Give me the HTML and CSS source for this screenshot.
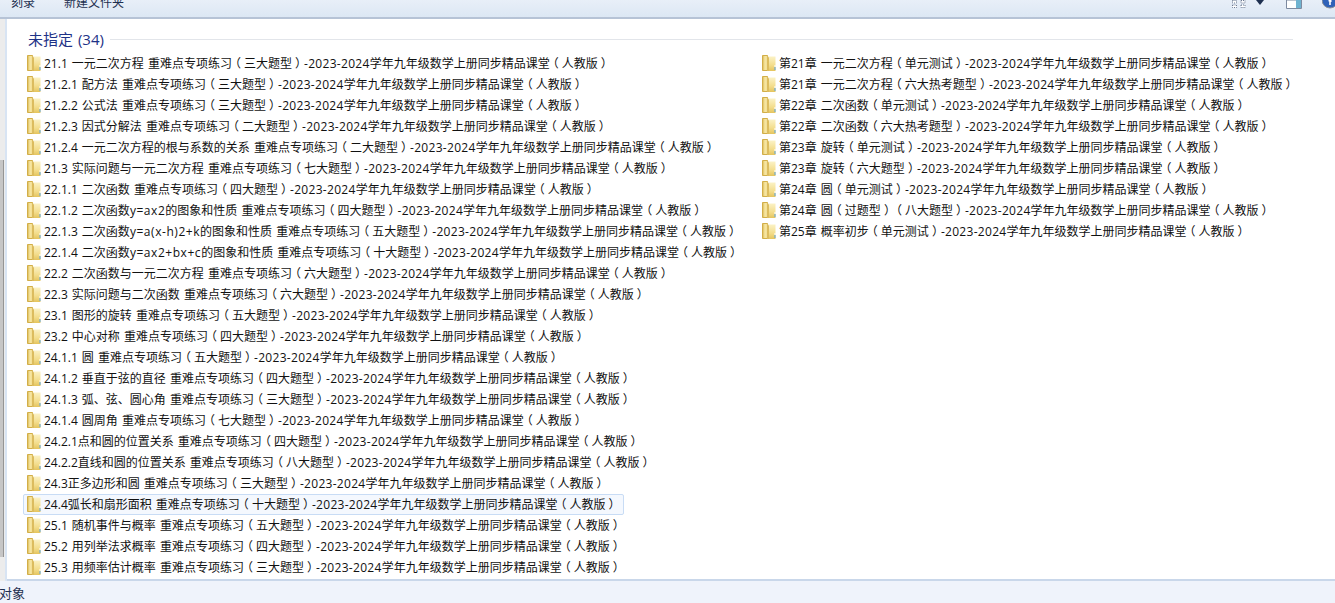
FILE: index.html
```html
<!DOCTYPE html>
<html lang="zh">
<head><meta charset="utf-8"><title>未指定</title><link rel="stylesheet" href="styles.css"></head>
<body>
<svg class="defs" width="0" height="0"><defs>
<linearGradient id="fg" x1="0" x2="1" y1="0" y2="0"><stop offset="0" stop-color="#d9b750"/><stop offset=".5" stop-color="#f7e7a4"/><stop offset="1" stop-color="#f1dc90"/></linearGradient>
<linearGradient id="fr" x1="0" x2="0" y1="0" y2="1"><stop offset="0" stop-color="#fbf2c6"/><stop offset=".6" stop-color="#f3dd8c"/><stop offset="1" stop-color="#e4c45e"/></linearGradient>
<symbol id="folder" viewBox="0 0 14 16">
<path d="M.5 .5h5v15h-5z" fill="url(#fg)" stroke="#d2ae48"/>
<path d="M5 0l2 2.500V16H5z" fill="#dcbc5e"/>
<path d="M7 1.500h6.500V16H7z" fill="url(#fr)"/>
<path d="M12.500 10h1v2h-1z" fill="#fff"/>
<path d="M12.500 12h1v3h-1z" fill="#5ba3dc"/>
</symbol>
</defs></svg>
<header class="toolbar">
  <div class="tools"><span class="tool">刻录</span><span class="tool">新建文件夹</span></div>
  <div class="views">
    <svg class="view-grid" width="14" height="8" viewBox="0 0 14 8"><path d="M.5 .5h4v2.500h-4zM.5 5h4v2.500h-4zM9 .5h4v2.500H9zM9 5h4v2.500H9z" fill="#fff" stroke="#6d7a90" stroke-dasharray="1 1"/></svg>
    <svg class="view-arrow" width="8" height="5" viewBox="0 0 8 5"><path d="M0 0h8L4 5z" fill="#1e3050"/></svg>
    <svg class="view-pane" width="16" height="9" viewBox="0 0 16 9"><path d="M.5 0v8.500h15V0z" fill="#fff" stroke="#7d8aa0"/><path d="M10 0h5v8h-5z" fill="#6fb3d0"/></svg>
    <svg class="view-help" width="13" height="9" viewBox="0 0 13 9"><circle cx="8" cy="0" r="8" fill="#2f62b8" stroke="#8a8f98"/><path d="M6.500 0h3v2H8.800v3H7.200V1.500H6.500z" fill="#fff"/></svg>
  </div>
</header>
<div class="main">
  <div class="nav"><div class="scroll-thumb"></div></div>
  <section class="content">
    <div class="group"><span class="group-title">未指定 (34)</span><span class="group-line"></span></div>
    <ul class="files">
      <li class="file"><svg class="ico"><use href="#folder"/></svg><span>21.1 一元二次方程 重难点专项练习<b class="p">（</b>三大题型<b class="p">）</b><span class="yr">-2023-2024</span>学年九年级数学上册同步精品课堂<b class="p">（</b>人教版<b class="p">）</b></span></li>
      <li class="file"><svg class="ico"><use href="#folder"/></svg><span>21.2.1 配方法 重难点专项练习<b class="p">（</b>三大题型<b class="p">）</b><span class="yr">-2023-2024</span>学年九年级数学上册同步精品课堂<b class="p">（</b>人教版<b class="p">）</b></span></li>
      <li class="file"><svg class="ico"><use href="#folder"/></svg><span>21.2.2 公式法 重难点专项练习<b class="p">（</b>三大题型<b class="p">）</b><span class="yr">-2023-2024</span>学年九年级数学上册同步精品课堂<b class="p">（</b>人教版<b class="p">）</b></span></li>
      <li class="file"><svg class="ico"><use href="#folder"/></svg><span>21.2.3 因式分解法 重难点专项练习<b class="p">（</b>二大题型<b class="p">）</b><span class="yr">-2023-2024</span>学年九年级数学上册同步精品课堂<b class="p">（</b>人教版<b class="p">）</b></span></li>
      <li class="file"><svg class="ico"><use href="#folder"/></svg><span>21.2.4 一元二次方程的根与系数的关系 重难点专项练习<b class="p">（</b>二大题型<b class="p">）</b><span class="yr">-2023-2024</span>学年九年级数学上册同步精品课堂<b class="p">（</b>人教版<b class="p">）</b></span></li>
      <li class="file"><svg class="ico"><use href="#folder"/></svg><span>21.3 实际问题与一元二次方程 重难点专项练习<b class="p">（</b>七大题型<b class="p">）</b><span class="yr">-2023-2024</span>学年九年级数学上册同步精品课堂<b class="p">（</b>人教版<b class="p">）</b></span></li>
      <li class="file"><svg class="ico"><use href="#folder"/></svg><span>22.1.1 二次函数 重难点专项练习<b class="p">（</b>四大题型<b class="p">）</b><span class="yr">-2023-2024</span>学年九年级数学上册同步精品课堂<b class="p">（</b>人教版<b class="p">）</b></span></li>
      <li class="file"><svg class="ico"><use href="#folder"/></svg><span>22.1.2 二次函数<span class="formula">y=ax2</span>的图象和性质 重难点专项练习<b class="p">（</b>四大题型<b class="p">）</b><span class="yr">-2023-2024</span>学年九年级数学上册同步精品课堂<b class="p">（</b>人教版<b class="p">）</b></span></li>
      <li class="file"><svg class="ico"><use href="#folder"/></svg><span>22.1.3 二次函数<span class="formula">y=a(x-h)2+k</span>的图象和性质 重难点专项练习<b class="p">（</b>五大题型<b class="p">）</b><span class="yr">-2023-2024</span>学年九年级数学上册同步精品课堂<b class="p">（</b>人教版<b class="p">）</b></span></li>
      <li class="file"><svg class="ico"><use href="#folder"/></svg><span>22.1.4 二次函数<span class="formula">y=ax2+bx+c</span>的图象和性质 重难点专项练习<b class="p">（</b>十大题型<b class="p">）</b><span class="yr">-2023-2024</span>学年九年级数学上册同步精品课堂<b class="p">（</b>人教版<b class="p">）</b></span></li>
      <li class="file"><svg class="ico"><use href="#folder"/></svg><span>22.2 二次函数与一元二次方程 重难点专项练习<b class="p">（</b>六大题型<b class="p">）</b><span class="yr">-2023-2024</span>学年九年级数学上册同步精品课堂<b class="p">（</b>人教版<b class="p">）</b></span></li>
      <li class="file"><svg class="ico"><use href="#folder"/></svg><span>22.3 实际问题与二次函数 重难点专项练习<b class="p">（</b>六大题型<b class="p">）</b><span class="yr">-2023-2024</span>学年九年级数学上册同步精品课堂<b class="p">（</b>人教版<b class="p">）</b></span></li>
      <li class="file"><svg class="ico"><use href="#folder"/></svg><span>23.1 图形的旋转 重难点专项练习<b class="p">（</b>五大题型<b class="p">）</b><span class="yr">-2023-2024</span>学年九年级数学上册同步精品课堂<b class="p">（</b>人教版<b class="p">）</b></span></li>
      <li class="file"><svg class="ico"><use href="#folder"/></svg><span>23.2 中心对称 重难点专项练习<b class="p">（</b>四大题型<b class="p">）</b><span class="yr">-2023-2024</span>学年九年级数学上册同步精品课堂<b class="p">（</b>人教版<b class="p">）</b></span></li>
      <li class="file"><svg class="ico"><use href="#folder"/></svg><span>24.1.1 圆 重难点专项练习<b class="p">（</b>五大题型<b class="p">）</b><span class="yr">-2023-2024</span>学年九年级数学上册同步精品课堂<b class="p">（</b>人教版<b class="p">）</b></span></li>
      <li class="file"><svg class="ico"><use href="#folder"/></svg><span>24.1.2 垂直于弦的直径 重难点专项练习<b class="p">（</b>四大题型<b class="p">）</b><span class="yr">-2023-2024</span>学年九年级数学上册同步精品课堂<b class="p">（</b>人教版<b class="p">）</b></span></li>
      <li class="file"><svg class="ico"><use href="#folder"/></svg><span>24.1.3 弧、弦、圆心角 重难点专项练习<b class="p">（</b>三大题型<b class="p">）</b><span class="yr">-2023-2024</span>学年九年级数学上册同步精品课堂<b class="p">（</b>人教版<b class="p">）</b></span></li>
      <li class="file"><svg class="ico"><use href="#folder"/></svg><span>24.1.4 圆周角 重难点专项练习<b class="p">（</b>七大题型<b class="p">）</b><span class="yr">-2023-2024</span>学年九年级数学上册同步精品课堂<b class="p">（</b>人教版<b class="p">）</b></span></li>
      <li class="file"><svg class="ico"><use href="#folder"/></svg><span>24.2.1点和圆的位置关系 重难点专项练习<b class="p">（</b>四大题型<b class="p">）</b><span class="yr">-2023-2024</span>学年九年级数学上册同步精品课堂<b class="p">（</b>人教版<b class="p">）</b></span></li>
      <li class="file"><svg class="ico"><use href="#folder"/></svg><span>24.2.2直线和圆的位置关系 重难点专项练习<b class="p">（</b>八大题型<b class="p">）</b><span class="yr">-2023-2024</span>学年九年级数学上册同步精品课堂<b class="p">（</b>人教版<b class="p">）</b></span></li>
      <li class="file"><svg class="ico"><use href="#folder"/></svg><span>24.3正多边形和圆 重难点专项练习<b class="p">（</b>三大题型<b class="p">）</b><span class="yr">-2023-2024</span>学年九年级数学上册同步精品课堂<b class="p">（</b>人教版<b class="p">）</b></span></li>
      <li class="file selected"><svg class="ico"><use href="#folder"/></svg><span>24.4弧长和扇形面积 重难点专项练习<b class="p">（</b>十大题型<b class="p">）</b><span class="yr">-2023-2024</span>学年九年级数学上册同步精品课堂<b class="p">（</b>人教版<b class="p">）</b></span></li>
      <li class="file"><svg class="ico"><use href="#folder"/></svg><span>25.1 随机事件与概率 重难点专项练习<b class="p">（</b>五大题型<b class="p">）</b><span class="yr">-2023-2024</span>学年九年级数学上册同步精品课堂<b class="p">（</b>人教版<b class="p">）</b></span></li>
      <li class="file"><svg class="ico"><use href="#folder"/></svg><span>25.2 用列举法求概率 重难点专项练习<b class="p">（</b>四大题型<b class="p">）</b><span class="yr">-2023-2024</span>学年九年级数学上册同步精品课堂<b class="p">（</b>人教版<b class="p">）</b></span></li>
      <li class="file"><svg class="ico"><use href="#folder"/></svg><span>25.3 用频率估计概率 重难点专项练习<b class="p">（</b>三大题型<b class="p">）</b><span class="yr">-2023-2024</span>学年九年级数学上册同步精品课堂<b class="p">（</b>人教版<b class="p">）</b></span></li>
      <li class="file"><svg class="ico"><use href="#folder"/></svg><span>第21章 一元二次方程<b class="p">（</b>单元测试<b class="p">）</b><span class="yr">-2023-2024</span>学年九年级数学上册同步精品课堂<b class="p">（</b>人教版<b class="p">）</b></span></li>
      <li class="file"><svg class="ico"><use href="#folder"/></svg><span>第21章 一元二次方程<b class="p">（</b>六大热考题型<b class="p">）</b><span class="yr">-2023-2024</span>学年九年级数学上册同步精品课堂<b class="p">（</b>人教版<b class="p">）</b></span></li>
      <li class="file"><svg class="ico"><use href="#folder"/></svg><span>第22章 二次函数<b class="p">（</b>单元测试<b class="p">）</b><span class="yr">-2023-2024</span>学年九年级数学上册同步精品课堂<b class="p">（</b>人教版<b class="p">）</b></span></li>
      <li class="file"><svg class="ico"><use href="#folder"/></svg><span>第22章 二次函数<b class="p">（</b>六大热考题型<b class="p">）</b><span class="yr">-2023-2024</span>学年九年级数学上册同步精品课堂<b class="p">（</b>人教版<b class="p">）</b></span></li>
      <li class="file"><svg class="ico"><use href="#folder"/></svg><span>第23章 旋转<b class="p">（</b>单元测试<b class="p">）</b><span class="yr">-2023-2024</span>学年九年级数学上册同步精品课堂<b class="p">（</b>人教版<b class="p">）</b></span></li>
      <li class="file"><svg class="ico"><use href="#folder"/></svg><span>第23章 旋转<b class="p">（</b>六大题型<b class="p">）</b><span class="yr">-2023-2024</span>学年九年级数学上册同步精品课堂<b class="p">（</b>人教版<b class="p">）</b></span></li>
      <li class="file"><svg class="ico"><use href="#folder"/></svg><span>第24章 圆<b class="p">（</b>单元测试<b class="p">）</b><span class="yr">-2023-2024</span>学年九年级数学上册同步精品课堂<b class="p">（</b>人教版<b class="p">）</b></span></li>
      <li class="file"><svg class="ico"><use href="#folder"/></svg><span>第24章 圆<b class="p">（</b>过题型<b class="p">）</b><b class="p">（</b>八大题型<b class="p">）</b><span class="yr">-2023-2024</span>学年九年级数学上册同步精品课堂<b class="p">（</b>人教版<b class="p">）</b></span></li>
      <li class="file"><svg class="ico"><use href="#folder"/></svg><span>第25章 概率初步<b class="p">（</b>单元测试<b class="p">）</b><span class="yr">-2023-2024</span>学年九年级数学上册同步精品课堂<b class="p">（</b>人教版<b class="p">）</b></span></li>
    </ul>
  </section>
</div>
<footer class="status">对象</footer>
</body>
</html>
```
FILE: styles.css
```css
html, body { margin: 0; height: 100%; overflow: hidden; }
body { display: flex; flex-direction: column; height: 603px; background: #eff3fb; color: #111; font: 12px/21px "Open Sans", "Noto Sans CJK SC", sans-serif; word-spacing: 1px; }
.defs { position: absolute; }
.toolbar { position: relative; height: 17px; flex: none; background: linear-gradient(#e8eff8, #dce7f4); border-bottom: 2px solid #b6c3d6; overflow: hidden; color: #1e3050; }
.tools { display: flex; gap: 29px; padding-left: 11px; line-height: 6px; }
.views { position: absolute; right: 0; top: 0; display: flex; align-items: flex-start; }
.view-arrow { margin-left: 10px; }
.view-pane { margin-left: 22px; }
.view-help { margin-left: 20px; }
.main { flex: 1; display: flex; min-height: 0; }
.nav { width: 5px; flex: none; background: #ececec; position: relative; border-right: 2px solid #d8e4f3; }
.scroll-thumb { position: absolute; left: 0; top: 141px; bottom: 24px; width: 3px; background: #c6c6c6; border-right: 1px solid #959595; }
.content { flex: 1; background: #fff; padding: 9px 42px 0 16px; border-bottom: 2px solid #c9d7ea; min-width: 0; }
.group { display: flex; align-items: center; height: 22px; gap: 6px; padding-left: 5px; margin-bottom: 3px; }
.group-title { font-size: 15px; color: #1e3287; white-space: nowrap; }
.group-line { flex: 1; height: 1px; background: #e2e5ea; }
.files { list-style: none; margin: 0; padding: 0; display: grid; grid-auto-flow: column; grid-template-rows: repeat(25, 21px); grid-template-columns: 735px 1fr; }
.file { display: flex; align-items: center; white-space: pre; height: 21px; padding: 0 5px 1px 3px; box-sizing: border-box; width: max-content; min-width: 0; border: 1px solid transparent; border-radius: 2px; }
.selected { background: #f4f8fe; border-color: #c8dcf5; }
.ico { width: 14px; height: 16px; margin: 1px 3px 0 0; flex: none; align-self: flex-start; }
.formula { letter-spacing: .55px; }
.yr { letter-spacing: .3px; }
.p { font-weight: 400; font-feature-settings: "halt"; margin: 0 3px; }
.status { height: 22px; flex: none; margin-left: -1px; line-height: 25px; font-size: 13px; color: #1e3050; }
```
